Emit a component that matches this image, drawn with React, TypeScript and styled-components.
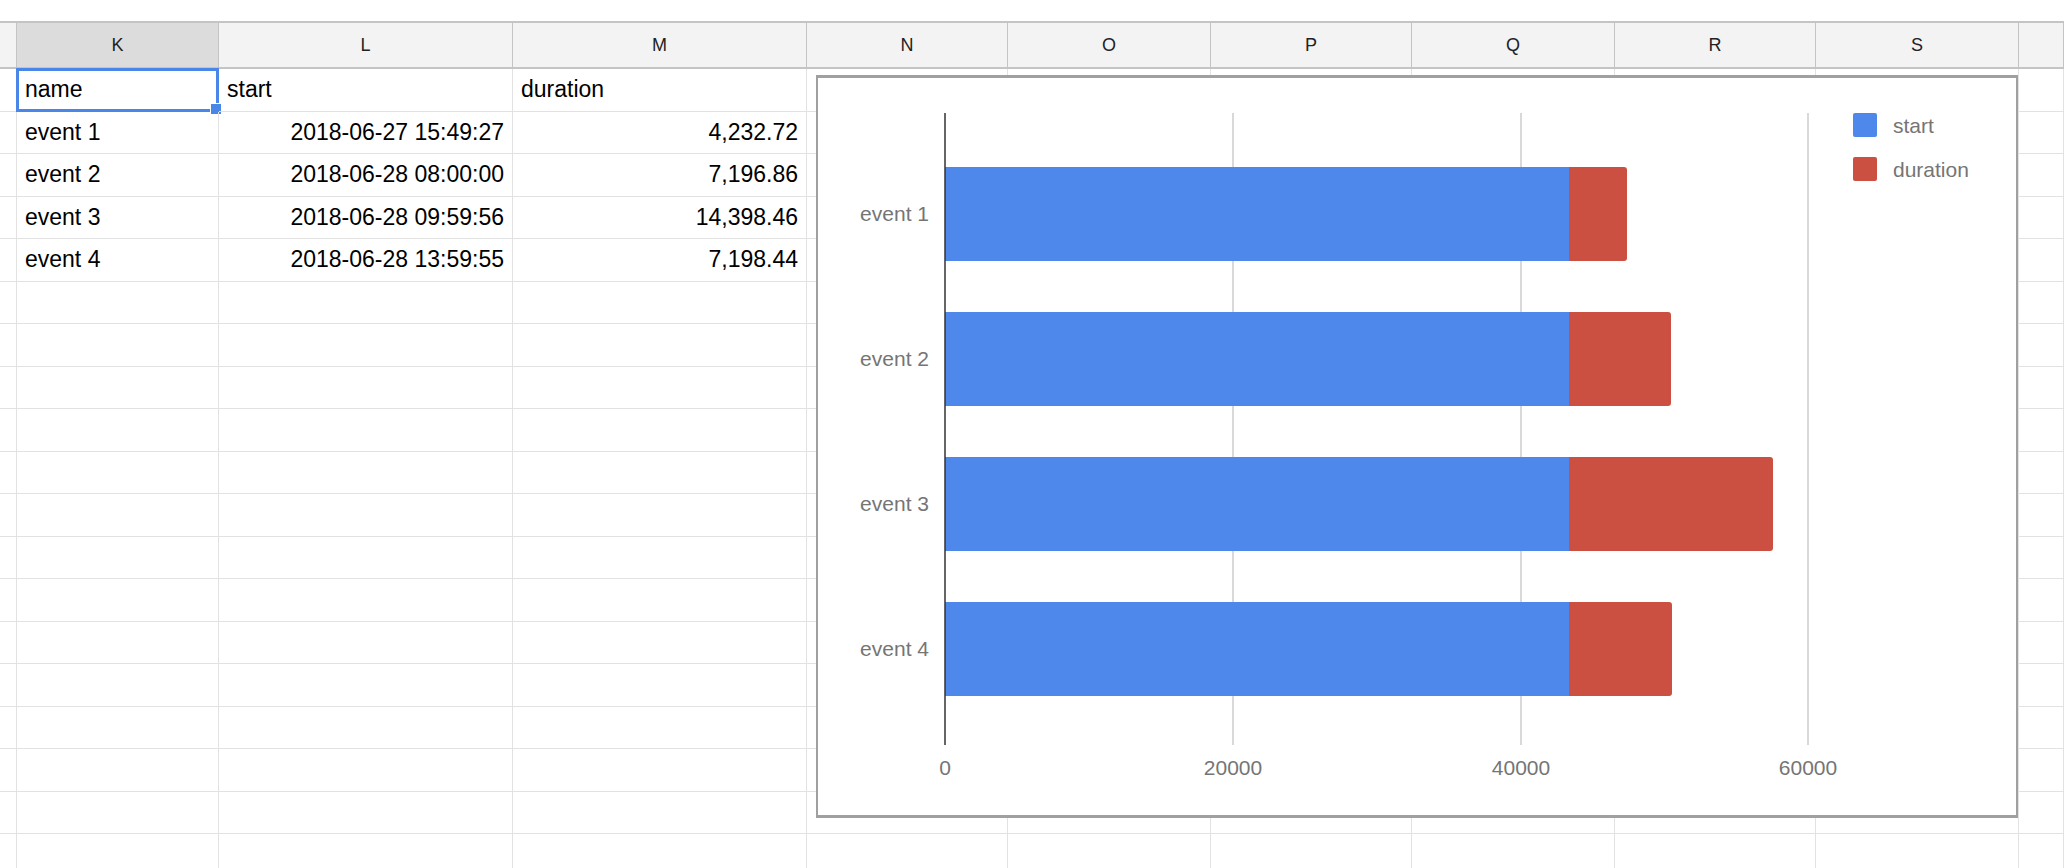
import React from "react";
import styled, { createGlobalStyle } from "styled-components";

const Global = createGlobalStyle`
  html, body { margin: 0; padding: 0; background: #fff; overflow: hidden; }
  body { font-family: Arial, "Liberation Sans", sans-serif; }
`;

const COLS = [17, 202, 294, 294, 201, 203, 201, 203, 201, 203, 45];
const LETTERS = ["", "K", "L", "M", "N", "O", "P", "Q", "R", "S", ""];
const ROW_H = 42.5;
const NROWS = 19;

const Page = styled.div`
  position: relative;
  width: 2064px;
  height: 868px;
  padding-top: 21px;
  box-sizing: border-box;
  overflow: hidden;
`;

const Grid = styled.div`
  display: grid;
  grid-template-columns: ${COLS.map((c) => c + "px").join(" ")};
  grid-template-rows: 46px repeat(${NROWS}, ${ROW_H}px);
  border-top: 2px solid #c4c4c4;
`;

const HeadCell = styled.div<{ $sel?: boolean }>`
  background: ${(p) => (p.$sel ? "#dcdcdc" : "#f3f3f3")};
  border-right: 1px solid #c4c4c4;
  border-bottom: 2px solid #c4c4c4;
  display: flex;
  align-items: center;
  justify-content: center;
  font-size: 18px;
  color: #222;
  box-sizing: border-box;
`;

const Cell = styled.div<{ $right?: boolean }>`
  position: relative;
  border-right: 1px solid #e2e2e2;
  border-bottom: 1px solid #e2e2e2;
  box-sizing: border-box;
  display: flex;
  align-items: center;
  justify-content: ${(p) => (p.$right ? "flex-end" : "flex-start")};
  padding: 0 8px;
  font-size: 23px;
  color: #000;
  white-space: nowrap;
`;

const Selection = styled.div`
  position: absolute;
  inset: -1px -1px -1px -1px;
  border: 3px solid #4a86e8;
  pointer-events: none;
`;

const Handle = styled.div`
  position: absolute;
  right: -6px;
  bottom: -6px;
  width: 10px;
  height: 10px;
  background: #4a86e8;
  border: 1px solid #fff;
`;

const ChartBox = styled.div`
  position: absolute;
  left: 816px;
  top: 75px;
  width: 1202px;
  height: 743px;
  background: #fff;
  border: 2px solid #a0a0a0;
  border-top-width: 3px;
  border-bottom-width: 3px;
  box-sizing: border-box;
`;

const data: string[][] = [
  ["name", "start", "duration"],
  ["event 1", "2018-06-27 15:49:27", "4,232.72"],
  ["event 2", "2018-06-28 08:00:00", "7,196.86"],
  ["event 3", "2018-06-28 09:59:56", "14,398.46"],
  ["event 4", "2018-06-28 13:59:55", "7,198.44"],
];

const bars = [
  { name: "event 1", cy: 136, end: 809 },
  { name: "event 2", cy: 281, end: 853 },
  { name: "event 3", cy: 426, end: 955 },
  { name: "event 4", cy: 571, end: 854 },
];

const Chart = () => {
  const x0 = 127;
  const blueEnd = 751;
  const txt = { fontFamily: "Arial, 'Liberation Sans', sans-serif", fontSize: 21, fill: "#757575" };
  return (
    <svg width="1198" height="737" viewBox="0 0 1198 737">
      {[415, 703, 990].map((x) => (
        <line key={x} x1={x} x2={x} y1={35} y2={667} stroke="#cccccc" strokeWidth={1.5} />
      ))}
      {bars.map((b) => (
        <g key={b.name}>
          <rect x={x0} y={b.cy - 47} width={blueEnd - x0} height={94} fill="#4f88eb" />
          <path
            d={`M${blueEnd} ${b.cy - 47} H${b.end - 3} Q${b.end} ${b.cy - 47} ${b.end} ${b.cy - 44} V${b.cy + 44} Q${b.end} ${b.cy + 47} ${b.end - 3} ${b.cy + 47} H${blueEnd} Z`}
            fill="#cb5041"
          />
          <text x={111} y={b.cy + 7} textAnchor="end" {...txt}>{b.name}</text>
        </g>
      ))}
      <line x1={x0} x2={x0} y1={35} y2={667} stroke="#333" strokeWidth={1.5} />
      {[
        [127, "0"],
        [415, "20000"],
        [703, "40000"],
        [990, "60000"],
      ].map(([x, l]) => (
        <text key={l as string} x={x as number} y={697} textAnchor="middle" {...txt}>{l}</text>
      ))}
      <rect x={1035} y={35} width={24} height={24} rx={2} fill="#4f88eb" />
      <text x={1075} y={55} {...txt}>start</text>
      <rect x={1035} y={79} width={24} height={24} rx={2} fill="#cb5041" />
      <text x={1075} y={99} {...txt}>duration</text>
    </svg>
  );
};

export default function App() {
  return (
    <Page>
      <Global />
      <Grid>
        {LETTERS.map((l, i) => (
          <HeadCell key={"h" + i} $sel={l === "K"}>{l}</HeadCell>
        ))}
        {Array.from({ length: NROWS }).map((_, r) =>
          COLS.map((_, c) => {
            const row = data[r];
            const v = row && c >= 1 && c <= 3 ? row[c - 1] : "";
            const right = r > 0 && (c === 2 || c === 3);
            return (
              <Cell key={r + "-" + c} $right={right}>
                {v}
                {r === 0 && c === 1 && (
                  <Selection>
                    <Handle />
                  </Selection>
                )}
              </Cell>
            );
          })
        )}
      </Grid>
      <ChartBox>
        <Chart />
      </ChartBox>
    </Page>
  );
}
